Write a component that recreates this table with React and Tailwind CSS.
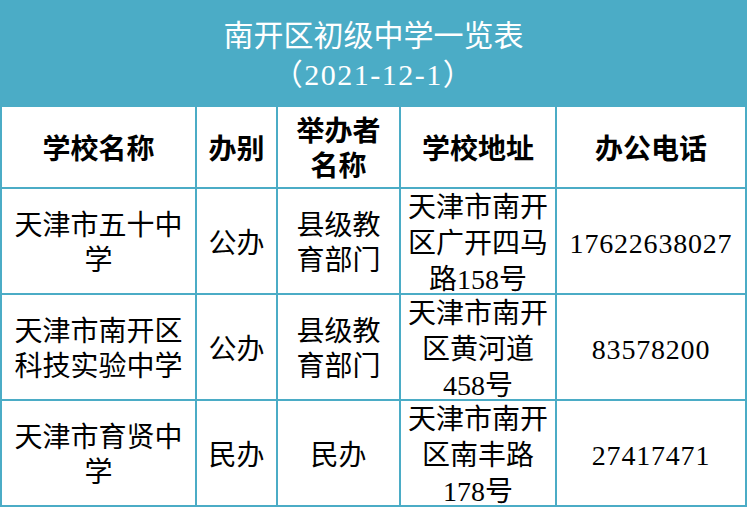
export default function App() {
  const font = { fontFamily: '"Liberation Serif", "Noto Sans CJK SC", serif' };

  const head = ['学校名称', '办别', ['举办者', '名称'], '学校地址', '办公电话'];

  const rows = [
    [['天津市五十中', '学'], '公办', ['县级教', '育部门'], ['天津市南开', '区广开四马', '路158号'], '17622638027'],
    [['天津市南开区', '科技实验中学'], '公办', ['县级教', '育部门'], ['天津市南开', '区黄河道', '458号'], '83578200'],
    [['天津市育贤中', '学'], '民办', '民办', ['天津市南开', '区南丰路', '178号'], '27417471'],
  ];

  const renderText = (v) =>
    Array.isArray(v) ? v.map((line, i) => <div key={i}>{line}</div>) : v;

  return (
    <div className="w-[747px] h-[507px] bg-[#4bacc6] overflow-hidden" style={font}>
      {/* 标题 */}
      <div className="h-[107px] flex flex-col items-center justify-center text-white text-[30px] leading-[39px] pt-[3px]">
        <div>南开区初级中学一览表</div>
        <div className="tracking-[1.5px]">（2021-12-1）</div>
      </div>

      {/* 表格 */}
      <div className="grid grid-cols-[193px_79px_121px_154px_188px] grid-rows-[80px_104px_104px_104px] gap-[2px] px-[2px] pb-[2px]">
        {head.map((h, i) => (
          <div
            key={i}
            className="bg-white flex flex-col items-center justify-center text-center font-bold text-black text-[28px] leading-[35px] pt-[4px]"
          >
            {renderText(h)}
          </div>
        ))}
        {rows.map((row, r) =>
          row.map((cell, c) => (
            <div
              key={`${r}-${c}`}
              className={`bg-white flex flex-col items-center justify-center text-center text-black text-[28px] ${
                c === 3 ? 'leading-[36px] pt-[6px]' : 'leading-[35px] pt-[4px]'
              } ${c === 4 ? 'tracking-[0.8px]' : ''}`}
            >
              {renderText(cell)}
            </div>
          ))
        )}
      </div>
    </div>
  );
}
